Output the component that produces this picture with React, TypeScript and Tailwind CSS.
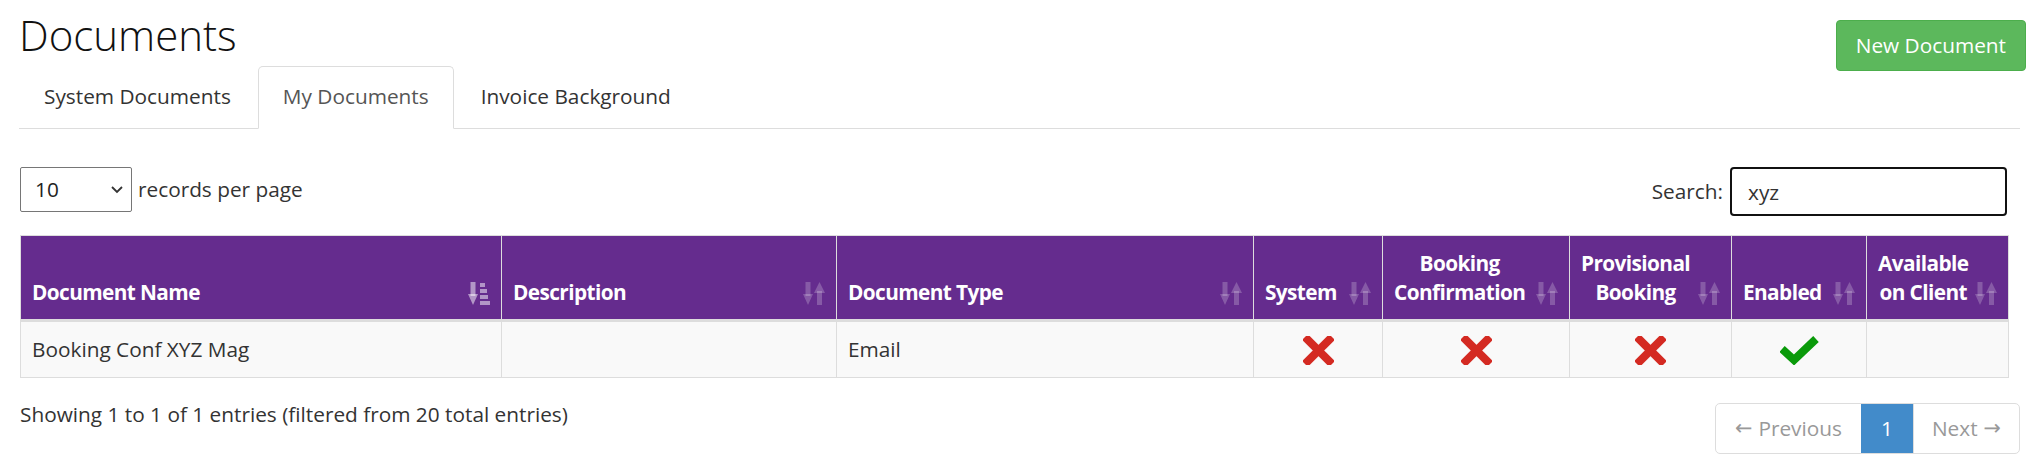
import React from 'react';

const FONT = { fontFamily: '"Open Sans", "Liberation Sans", sans-serif' };

function SortIcon({ active }: { active?: boolean }) {
  // unsorted: down arrow + up arrow; sorted: down arrow + stacked bars
  const fill = active ? 'rgba(255,255,255,0.5)' : 'rgba(255,255,255,0.22)';
  return (
    <svg width="22" height="23" viewBox="0 0 22 23" className="shrink-0 mb-[2px]">
      <rect x="2.5" y="0" width="5" height="14" fill={fill} />
      <polygon points="0,12 10,12 5,23" fill={fill} />
      {active ? (
        <>
          <rect x="12" y="1" width="5" height="4" fill={fill} />
          <rect x="12" y="7" width="7" height="4" fill={fill} />
          <rect x="12" y="13" width="8" height="4" fill={fill} />
          <rect x="12" y="19" width="10" height="4" fill={fill} />
        </>
      ) : (
        <>
          <polygon points="11,11 22,11 16.5,0" fill={fill} />
          <rect x="14" y="9" width="5" height="14" fill={fill} />
        </>
      )}
    </svg>
  );
}

function Cross() {
  return (
    <svg width="31" height="29" viewBox="0 0 31 29" className="inline-block align-middle">
      <g stroke="#d42a22" strokeWidth="8" strokeLinecap="butt">
        <line x1="2" y1="1" x2="29" y2="28" />
        <line x1="29" y1="1" x2="2" y2="28" />
      </g>
    </svg>
  );
}

function Tick() {
  return (
    <svg width="39" height="29" viewBox="0 0 39 29" className="inline-block align-middle">
      <polyline points="2,13 14,24 36,3" fill="none" stroke="#0a9a0a" strokeWidth="8" strokeLinejoin="miter" />
    </svg>
  );
}

const columns: { label: React.ReactNode; width: string; active?: boolean }[] = [
  { label: 'Document Name', width: 'w-[481px]', active: true },
  { label: 'Description', width: 'w-[335px]' },
  { label: 'Document Type', width: 'w-[417px]' },
  { label: 'System', width: 'w-[129px]' },
  { label: <>Booking<br />Confirmation</>, width: 'w-[187px]' },
  { label: <>Provisional<br />Booking</>, width: 'w-[162px]' },
  { label: 'Enabled', width: 'w-[135px]' },
  { label: <>Available<br />on Client</>, width: 'w-[142px]' },
];

const ARROW = { fontFamily: '"DejaVu Sans", sans-serif' };

export default function App() {
  const tabs = ['System Documents', 'My Documents', 'Invoice Background'];
  const activeTab = 1;

  return (
    <div style={FONT} className="min-h-screen bg-white pl-[19px] pr-[15px] text-[20.8px] leading-[29px] text-[#333]">
      {/* Page header */}
      <div className="flex h-[66px] items-start justify-between">
        <h1 className="mt-[12px] text-[42px] font-light leading-[1.1] text-[#111]">Documents</h1>
        <button className="-mr-[6px] mt-[20px] h-[51px] rounded-[4px] border border-[#4cae4c] bg-[#5cb85c] px-[19px] text-white">
          New Document
        </button>
      </div>

      {/* Tabs */}
      <ul className="flex border-b border-[#ddd]">
        {tabs.map((t, i) => (
          <li key={t} className="-mb-px mr-[2px]">
            <span
              className={
                i === activeTab
                  ? 'block rounded-t-[5px] border border-[#ddd] border-b-white bg-white px-[24px] pb-[17px] pt-[15px] text-[#555]'
                  : 'block border border-transparent px-[24px] pb-[17px] pt-[15px] text-[#333]'
              }
            >
              {t}
            </span>
          </li>
        ))}
      </ul>

      <div className="ml-[1px] mr-[13px]">
        {/* Length + search */}
        <div className="mt-[38px] flex items-start justify-between">
          <div className="flex items-center">
            <div className="relative">
              <select
                defaultValue="10"
                className="h-[45px] w-[112px] appearance-none rounded-[2px] border border-[#767676] bg-white pl-[14px] text-[20.8px] text-[#222] outline-none"
              >
                <option>10</option>
                <option>25</option>
                <option>50</option>
                <option>100</option>
              </select>
              <svg width="12" height="8" viewBox="0 0 12 8" className="pointer-events-none absolute right-[9px] top-[19px]">
                <polyline points="1,1 6,6 11,1" fill="none" stroke="#333" strokeWidth="1.8" />
              </svg>
            </div>
            <span className="ml-[6px]">records per page</span>
          </div>
          <div className="flex items-center">
            <span className="mr-[7px]">Search:</span>
            <input
              defaultValue="xyz"
              className="h-[49px] w-[277px] rounded-[4px] border-2 border-[#111] px-[16px] text-[20.8px] text-[#333] outline-none"
            />
          </div>
        </div>

        {/* Table */}
        <table className="mt-[19px] w-[1987px] table-fixed border-collapse">
          <colgroup>
            {columns.map((c, i) => (
              <col key={i} className={c.width} />
            ))}
          </colgroup>
          <thead>
            <tr className="bg-[#652c8e] text-white">
              {columns.map((c, i) => (
                <th
                  key={i}
                  className="border border-b-[3px] border-[#ddd] px-[11px] pb-[12px] pt-[13px] text-left align-bottom font-bold tracking-[-0.6px]"
                >
                  <div className="flex items-end justify-between">
                    <span className="inline-block text-center">{c.label}</span>
                    <SortIcon active={c.active} />
                  </div>
                </th>
              ))}
            </tr>
          </thead>
          <tbody>
            <tr className="bg-[#f9f9f9]">
              <td className="border border-[#ddd] px-[11px] py-[12px]">Booking Conf XYZ Mag</td>
              <td className="border border-[#ddd] px-[11px] py-[12px]"></td>
              <td className="border border-[#ddd] px-[11px] py-[12px]">Email</td>
              <td className="border border-[#ddd] px-[11px] py-[12px] text-center"><Cross /></td>
              <td className="border border-[#ddd] px-[11px] py-[12px] text-center"><Cross /></td>
              <td className="border border-[#ddd] px-[11px] py-[12px] text-center"><Cross /></td>
              <td className="border border-[#ddd] px-[11px] py-[12px] text-center"><Tick /></td>
              <td className="border border-[#ddd] px-[11px] py-[12px]"></td>
            </tr>
          </tbody>
        </table>
      </div>

      {/* Footer */}
      <div className="mt-[22px] flex items-start justify-between">
        <div className="ml-[1px]">Showing 1 to 1 of 1 entries (filtered from 20 total entries)</div>
        <ul className="mt-[3px] flex h-[51px] overflow-hidden rounded-[5px] border border-[#ddd]">
          <li className="flex items-center px-[19px] text-[#999]">
            <span style={ARROW} className="mr-[6px]">←</span>Previous
          </li>
          <li className="flex w-[52px] items-center justify-center bg-[#428bca] text-white">1</li>
          <li className="flex items-center border-l border-[#ddd] px-[18px] text-[#999]">
            Next<span style={ARROW} className="ml-[6px]">→</span>
          </li>
        </ul>
      </div>
    </div>
  );
}
